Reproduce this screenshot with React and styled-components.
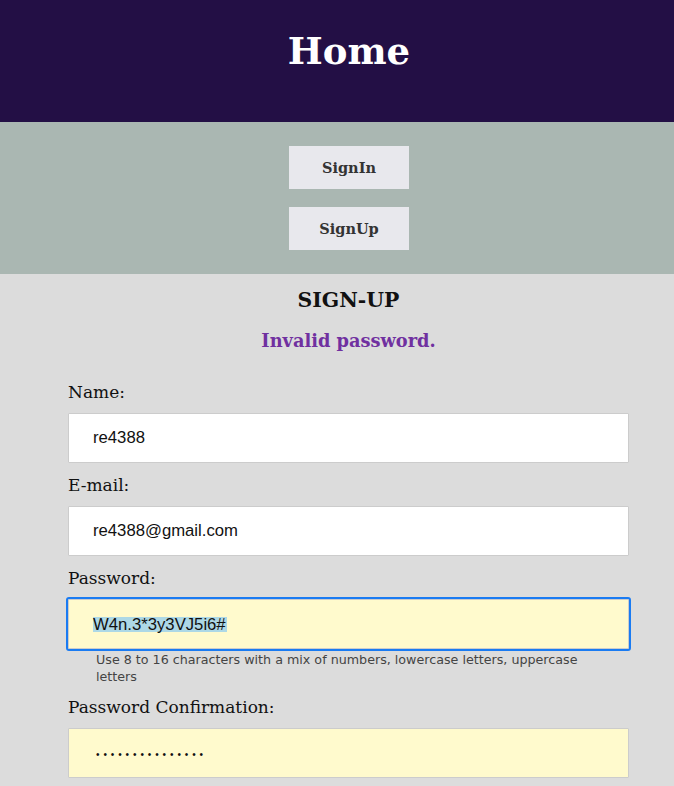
import React from "react";
import styled, { createGlobalStyle } from "styled-components";

const Global = createGlobalStyle`
  html, body { margin: 0; padding: 0; background: #dcdcdc; overflow: hidden; }
  body { font-family: "DejaVu Serif", Georgia, serif; }
  * { box-sizing: border-box; }
`;

const Page = styled.div`
  width: 698px;
  min-height: 786px;
  background: #dcdcdc;
`;

const Header = styled.header`
  height: 122px;
  background: #230f45;
  padding-top: 27px;
  text-align: center;
`;

const Title = styled.h1`
  margin: 0;
  font-size: 37px;
  line-height: 48px;
  font-weight: 700;
  color: #ffffff;
`;

const Nav = styled.nav`
  background: #aab7b2;
  padding: 24px 0;
  display: flex;
  flex-direction: column;
  align-items: center;
  gap: 18px;
`;

const NavButton = styled.button`
  width: 120px;
  height: 43px;
  border: none;
  background: #e8e8ed;
  color: #333;
  font-family: "DejaVu Serif", Georgia, serif;
  font-weight: 700;
  font-size: 14.5px;
  cursor: pointer;
`;

const Main = styled.main`
  padding: 14px 69px 0 68px;
  display: flex;
  flex-direction: column;
  align-items: center;
`;

const Heading = styled.h2`
  margin: 0;
  font-size: 20.4px;
  line-height: 24px;
  font-weight: 700;
  color: #111;
`;

const ErrorText = styled.h3`
  margin: 17px 0 0;
  font-size: 17.8px;
  line-height: 24px;
  font-weight: 700;
  color: #7030a0;
`;

const Form = styled.form`
  margin-top: 29px;
  align-self: stretch;
  display: flex;
  flex-direction: column;
  gap: 12px;
`;

const Field = styled.div`
  display: flex;
  flex-direction: column;
  gap: 10px;
`;

const Label = styled.label`
  font-size: 17px;
  line-height: 21px;
  color: #111;
`;

const InputBox = styled.div`
  height: 50px;
  display: flex;
  align-items: center;
  padding: 0 24px;
  border: 1px solid #cccccc;
  border-radius: 1px;
  background: ${(p) => (p.$tone === "yellow" ? "#fffacd" : "#ffffff")};
  outline: ${(p) => (p.$focused ? "2px solid #1a7bf2" : "none")};
  font-family: "Liberation Sans", Arial, sans-serif;
  font-size: 16.7px;
  color: #111;
`;

const Selected = styled.span`
  background: #add8e6;
  line-height: 15px;
  padding: 0 1px 0 0;
`;

const Dots = styled.span`
  font-size: 10px;
  letter-spacing: 3.9px;
  color: #111;
  margin: 2px 0 0 3px;
`;

const Hint = styled.p`
  margin: 2px 0 0;
  padding: 0 28px;
  font-family: "DejaVu Sans", Tahoma, sans-serif;
  font-size: 12.7px;
  line-height: 17px;
  color: #444;
`;

export default function App() {
  return (
    <>
      <Global />
      <Page>
        <Header>
          <Title>Home</Title>
        </Header>
        <Nav>
          <NavButton type="button">SignIn</NavButton>
          <NavButton type="button">SignUp</NavButton>
        </Nav>
        <Main>
          <Heading>SIGN-UP</Heading>
          <ErrorText>Invalid password.</ErrorText>
          <Form onSubmit={(e) => e.preventDefault()}>
            <Field>
              <Label>Name:</Label>
              <InputBox>re4388</InputBox>
            </Field>
            <Field>
              <Label>E-mail:</Label>
              <InputBox>re4388@gmail.com</InputBox>
            </Field>
            <Field>
              <Label>Password:</Label>
              <div>
                <InputBox $tone="yellow" $focused>
                  <Selected>W4n.3*3y3VJ5i6#</Selected>
                </InputBox>
                <Hint>
                  Use 8 to 16 characters with a mix of numbers, lowercase letters, uppercase letters
                </Hint>
              </div>
            </Field>
            <Field>
              <Label>Password Confirmation:</Label>
              <InputBox $tone="yellow">
                <Dots>{"•".repeat(15)}</Dots>
              </InputBox>
            </Field>
          </Form>
        </Main>
      </Page>
    </>
  );
}
